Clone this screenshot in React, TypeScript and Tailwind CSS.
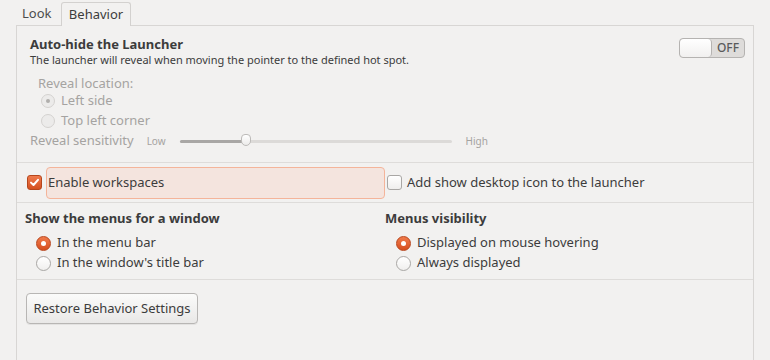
import React from 'react'

const font = { fontFamily: '"Noto Sans", "Open Sans", sans-serif' }

const Radio = ({ checked, disabled }: { checked?: boolean; disabled?: boolean }) => {
  if (disabled) {
    return (
      <span className="flex h-[14px] w-[14px] items-center justify-center rounded-full border border-[#d4d2d0] bg-[#ecebea]">
        {checked && <span className="h-[4px] w-[4px] rounded-full bg-[#b0aeac]" />}
      </span>
    )
  }
  if (checked) {
    return (
      <span className="flex h-[15px] w-[15px] items-center justify-center rounded-full border border-[#b8451c] bg-gradient-to-b from-[#f07a4a] to-[#d64d1c]">
        <span className="h-[5px] w-[5px] rounded-full bg-white" />
      </span>
    )
  }
  return <span className="h-[15px] w-[15px] rounded-full border border-[#a9a7a5] bg-gradient-to-b from-white to-[#f0efee]" />
}

const RadioRow = ({ label, checked, disabled }: { label: string; checked?: boolean; disabled?: boolean }) => (
  <div className={`flex h-[20px] items-center gap-[6px] text-[13px] ${disabled ? 'text-[#a5a3a1]' : 'text-[#3c3c3c]'}`}>
    <Radio checked={checked} disabled={disabled} />
    <span>{label}</span>
  </div>
)

const App = () => {
  return (
    <div className="h-[360px] w-[770px] overflow-hidden bg-[#f2f1f0] text-[#3c3c3c]" style={font}>
      {/* tabs */}
      <div className="flex h-[25px] items-end pl-[16px]">
        <div className="flex h-[22px] w-[45px] items-center pl-[6px] text-[13px] text-[#4c4c4c]">Look</div>
        <div className="relative z-10 -mb-px flex h-[24px] w-[70px] items-center justify-center rounded-t-[3px] border border-b-0 border-[#d3d1cf] bg-[#f2f1f0] text-[13px]">
          Behavior
        </div>
      </div>

      <div className="ml-[16px] h-[340px] w-[738px] border-x border-t border-[#d8d6d4]">
        {/* auto-hide */}
        <div className="flex h-[136px] flex-col pl-[13px] pr-[8px] pt-[10px]">
          <div className="flex items-start justify-between">
            <div>
              <div className="text-[13px] font-bold leading-[17px]">Auto-hide the Launcher</div>
              <div className="text-[11px] leading-[13px]">
                The launcher will reveal when moving the pointer to the defined hot spot.
              </div>
            </div>
            <div className="mt-[2px] flex h-[20px] w-[66px] overflow-hidden rounded-[4px] border border-[#b5b3b1] bg-[#dedcda]">
              <div className="w-[32px] rounded-[4px] border-r border-[#b5b3b1] bg-gradient-to-b from-white to-[#f1f0ef]" />
              <div className="flex flex-1 items-center justify-center text-[12px] font-medium text-[#5a5a5a]">OFF</div>
            </div>
          </div>
          <div className="mt-[11px] pl-[8px]">
            <div className="flex h-[14px] items-center text-[13px] text-[#a5a3a1]">Reveal location:</div>
            <div className="pl-[3px]">
              <RadioRow label="Left side" checked disabled />
              <RadioRow label="Top left corner" disabled />
            </div>
          </div>
          <div className="flex h-[20px] items-center text-[#a5a3a1]">
            <span className="text-[13px]">Reveal sensitivity</span>
            <span className="ml-[13px] text-[10px]">Low</span>
            <div className="relative ml-[14px] flex h-[20px] w-[272px] items-center">
              <div className="h-[3px] w-full rounded-full bg-[#dcdad8]" />
              <div className="absolute left-0 h-[3px] w-[66px] rounded-full bg-[#a9a7a5]" />
              <div className="absolute left-[61px] top-[3px] h-[12px] w-[10px] rounded-t-[4px] rounded-b-[5px] border border-[#bdbbb9] bg-gradient-to-b from-white to-[#ecebea]" />
            </div>
            <span className="ml-[14px] text-[10px]">High</span>
          </div>
        </div>

        <div className="h-px bg-[#dedcda]" />

        {/* workspaces */}
        <div className="flex h-[39px] items-center pl-[10px]">
          <span className="flex h-[15px] w-[15px] items-center justify-center rounded-[3px] border border-[#b5461d] bg-gradient-to-b from-[#ef7a4c] to-[#d4501f]">
            <svg width="11" height="11" viewBox="0 0 11 11">
              <path d="M2 5.6 L4.5 8 L9 2.8" fill="none" stroke="white" strokeWidth="2" strokeLinecap="round" strokeLinejoin="round" />
            </svg>
          </span>
          <div className="ml-[4px] flex h-[32px] w-[339px] items-center rounded-[4px] border border-[#f4b49a] bg-[#f4e4de] pl-[1px] text-[13px]">
            Enable workspaces
          </div>
          <span className="ml-[2px] h-[15px] w-[15px] rounded-[3px] border border-[#a9a7a5] bg-gradient-to-b from-white to-[#efeeed]" />
          <span className="ml-[5px] text-[13px]">Add show desktop icon to the launcher</span>
        </div>

        <div className="h-px bg-[#dedcda]" />

        {/* menus */}
        <div className="grid h-[76px] grid-cols-[360px_1fr] pl-[8px] pt-[6px]">
          <div>
            <div className="text-[13px] font-bold leading-[18px]">Show the menus for a window</div>
            <div className="mt-[6px] pl-[11px]">
              <RadioRow label="In the menu bar" checked />
              <RadioRow label="In the window's title bar" />
            </div>
          </div>
          <div>
            <div className="text-[13px] font-bold leading-[18px]">Menus visibility</div>
            <div className="mt-[6px] pl-[11px]">
              <RadioRow label="Displayed on mouse hovering" checked />
              <RadioRow label="Always displayed" />
            </div>
          </div>
        </div>

        <div className="h-px bg-[#dedcda]" />

        <div className="pl-[9px] pt-[13px]">
          <button className="h-[31px] w-[172px] rounded-[4px] border border-[#b8b6b4] bg-gradient-to-b from-[#fbfbfa] to-[#e9e8e7] text-[13px] text-[#3c3c3c] shadow-[0_1px_0_rgba(0,0,0,0.06)]">
            Restore Behavior Settings
          </button>
        </div>
      </div>
    </div>
  )
}

export default App
